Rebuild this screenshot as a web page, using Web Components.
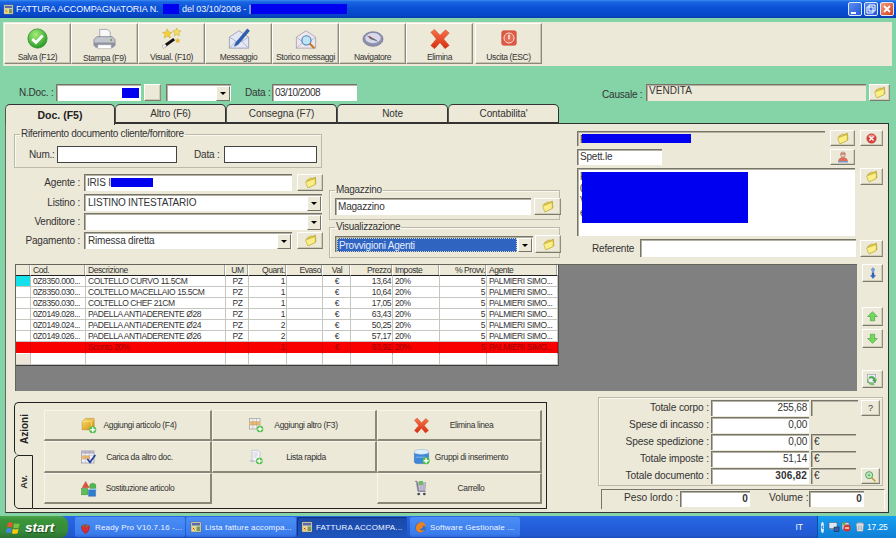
<!DOCTYPE html>
<html lang="it"><head><meta charset="utf-8"><title>Fattura</title>
<style>html,body{margin:0;padding:0;background:#84d4a8}</style></head>
<body>
<fattura-app></fattura-app>
<script>
const ICONS={
check:`<defs><radialGradient id="a" cx=".4" cy=".3" r=".8"><stop offset="0" stop-color="#a6ee78"/><stop offset="1" stop-color="#169018"/></radialGradient></defs><circle cx="12" cy="12" r="11" fill="url(#a)" stroke="#2a8a2e" stroke-width=".8"/><path d="M6 12.500l4.200 4.200L18 8.600" fill="none" stroke="#fff" stroke-width="3.200"/>`,
printer:`<path d="M7 10V1.500h8l3 2.500v6z" fill="#f8f8fa" stroke="#8a8f9c" stroke-width=".7"/><path d="M1 12l3-3h16l3 3v6l-2 2H3l-2-2z" fill="#c4c6ce" stroke="#6c7080" stroke-width=".7"/><path d="M1 15h22v3l-2 2H3l-2-2z" fill="#8f929e"/><path d="M5 17.500h14v4H5z" fill="#fff" stroke="#9a9ca8" stroke-width=".5"/><circle cx="19" cy="12.500" r="1" fill="#5a9a4a"/>`,
wand:`<path d="M1 20.500L14 11.500l2 2.500L3 23.500z" fill="#111"/><path d="M1 20.500l3.500-2.400 2 2.500L3 23.500z" fill="#eee"/><path d="M7 1l1.800 3.600 4 .4-3 2.500 1 3.900-3.700-2-3.400 2.100.8-4L1.600 5l3.900-.4z" fill="#f3d23c" stroke="#b08a10" stroke-width=".4"/><path d="M18 0l1.500 3 3.400.4-2.500 2.200.7 3.300-3.100-1.600-2.900 1.700.6-3.400-2.400-2.300 3.400-.4z" fill="#f5dd62" stroke="#b08a10" stroke-width=".4"/><path d="M19 11l1 2 2.300.3-1.600 1.600.4 2.300-2.100-1.100-2 1.100.4-2.300-1.600-1.600 2.200-.3z" fill="#e8b93a"/>`,
mailpen:`<path d="M1.500 10L12 3l10.500 7v12h-21z" fill="#e4e7f4" stroke="#7d83a8" stroke-width=".7"/><path d="M1.500 22l8-8 5 0 8 8M1.500 10l8 5M22.500 10l-8 5" fill="none" stroke="#9298b8" stroke-width=".7"/><path d="M21 1l2.500 2L11 18l-4 2 1.500-4z" fill="#2a5fb8" stroke="#173c80" stroke-width=".5"/>`,
mailmag:`<path d="M1.500 10L12 3l10.500 7v12h-21z" fill="#eee6ea" stroke="#8f8ea8" stroke-width=".7"/><path d="M1.500 10l8 6M22.500 10l-8 6M1.500 22l8-7M22.500 22l-8-7" fill="none" stroke="#a4a4c0" stroke-width=".7"/><circle cx="12.500" cy="13.500" r="5" fill="#bfe3f7" stroke="#3f7fbf" stroke-width="1.200"/><path d="M16 17l5 5" stroke="#c9791d" stroke-width="2.200"/>`,
compass:`<ellipse cx="12" cy="12" rx="11" ry="8" fill="#8f8fb0" stroke="#6d6d8e" stroke-width=".7"/><ellipse cx="12" cy="11" rx="8.500" ry="5.500" fill="#d9d8e8"/><path d="M5 8l9 4 4 3-9-3z" fill="#5a6e7a"/><path d="M8 9l4 3" stroke="#c33" stroke-width="1"/>`,
x:`<defs><linearGradient id="a" x2="0" y2="1"><stop offset="0" stop-color="#f4744a"/><stop offset="1" stop-color="#d92d10"/></linearGradient></defs><path d="M2 4.500L6 1.500l6 6.500 6-6 4 3.500-6 6.500 6 7-4.500 3.500-5.500-6.500-6 6.500-4-3.500 6-7z" fill="url(#a)" stroke="#c8401f" stroke-width=".5"/>`,
power:`<rect x="1" y="1" width="22" height="22" rx="3" fill="#df5a42" stroke="#c23a28" stroke-width=".7"/><circle cx="12" cy="12" r="7.500" fill="none" stroke="#fbe6e0" stroke-width="1.500"/><circle cx="12" cy="12" r="6" fill="#e46c55"/><rect x="11" y="7" width="2" height="7" fill="#fff"/>`,
folder:`<path d="M5 8l8-4.500 2 1.200 6-2.700 1 12.500L9 21z" fill="#e9cf50" stroke="#a8901f" stroke-width="1"/><path d="M3 11l15-5.500 3 .5-.5 10L7 22z" fill="#fbee86" stroke="#b09a24" stroke-width="1"/>`,
xcircle:`<circle cx="12" cy="12" r="10.500" fill="#d8413b" stroke="#a82a28" stroke-width=".7"/><ellipse cx="12" cy="7" rx="7" ry="4" fill="#ee8a80"/><path d="M7.500 7.500l9 9M16.500 7.500l-9 9" stroke="#fff" stroke-width="2.800"/>`,
person:`<circle cx="12" cy="7" r="5" fill="#f0d8c8" stroke="#a34a3a"/><path d="M3 21c0-6 4-8 9-8s9 2 9 8z" fill="#e46b55" stroke="#a34a3a" stroke-width=".7"/><path d="M2 20h20v3H2z" fill="#7f96c8"/><path d="M8 5h8v2H8z" fill="#a34a3a"/>`,
dblarrow:`<path d="M12 1l4 5h-2.500v5h-3V6H8z" fill="#79a9ea" stroke="#2458b8" stroke-width=".7"/><path d="M12 23l-5-6h3v-5h4v5h3z" fill="#2f67d0" stroke="#1a3f90" stroke-width=".7"/>`,
up:`<path d="M12 3l9 9h-5v8H8v-8H3z" fill="#74d65c" stroke="#2f9a32"/>`,
down:`<path d="M12 21l9-9h-5V4H8v8H3z" fill="#74d65c" stroke="#2f9a32"/>`,
swap:`<rect x="3" y="3" width="15" height="15" fill="#eef2f8" stroke="#8893a8"/><path d="M6 7c6-3 11 0 11 6l3-1-4 6-4-5 2 .5c0-3-4-6-8-3z" fill="#46b04a" stroke="#257a2a" stroke-width=".5"/><path d="M4 10c-1 6 4 10 10 9l1 3-8-1-4-6z" fill="#79cf68" stroke="#257a2a" stroke-width=".5"/>`,
boxplus:`<defs><linearGradient id="a" x2="1" y2="1"><stop offset="0" stop-color="#fbe36a"/><stop offset="1" stop-color="#d18a10"/></linearGradient></defs><path d="M3 6l5-4h12v12l-4 4H3z" fill="url(#a)" stroke="#a87410" stroke-width=".6"/><path d="M3 6h13v12M16 6l4-4" fill="none" stroke="#fff3a8" stroke-width=".8"/><circle cx="18" cy="18" r="5" fill="#4fbf4a"/><path d="M18 14.500v7M14.500 18h7" stroke="#fff" stroke-width="2"/>`,
gridplus:`<rect x="2" y="2" width="16" height="16" fill="#f4f2ee" stroke="#999"/><path d="M2 7h16v5H2z" fill="#f2b866"/><path d="M7.300 2v16M12.600 2v16M2 7h16M2 12h16" stroke="#a49a8c" stroke-width=".7"/><circle cx="18" cy="18" r="5" fill="#4fbf4a"/><path d="M18 14.500v7M14.500 18h7" stroke="#fff" stroke-width="2"/>`,
gridcheck:`<rect x="2" y="3" width="19" height="18" fill="#f4f2f4" stroke="#8a86a0"/><path d="M2 3h19v4H2z" fill="#b7b3c8"/><path d="M2 10h13v5H2z" fill="#f2b866"/><path d="M8 3v18M14 3v18M2 10h19M2 15h19" stroke="#a8a4b8" stroke-width=".7"/><path d="M11 15l4 5 8-11" fill="none" stroke="#1f3f9f" stroke-width="2.400"/>`,
docplus:`<path d="M6 2h9l3 3v13H6z" fill="#f4f4fa" stroke="#a8a8c0" stroke-width=".8"/><path d="M8 6h7M8 9h7M8 12h5" stroke="#b8b8cc" stroke-width=".8"/><path d="M1 18l6-2 3 4z" fill="#b8bccb"/><circle cx="17" cy="18" r="5" fill="#4fbf4a"/><path d="M17 14.500v7M13.500 18h7" stroke="#fff" stroke-width="2"/>`,
shapes:`<path d="M8 2l5 9H3z" fill="#e2503a" stroke="#a33" stroke-width=".5"/><circle cx="18" cy="9" r="4.500" fill="#4fb84f" stroke="#2a7a2a" stroke-width=".5"/><rect x="2" y="12" width="9" height="9" fill="#5cbf5c" stroke="#2a7a2a" stroke-width=".5"/><path d="M12 14h10v9H12z" fill="#2f7fd0" stroke="#1a4f90" stroke-width=".5"/><path d="M12 14l3-2h9l-2 2z" fill="#8fc0ee"/>`,
basket:`<path d="M2 7c0-3 20-3 20 0v12c0 2-2 3-3 3H5c-1 0-3-1-3-3z" fill="#3f87d8" stroke="#1c5aa8" stroke-width=".6"/><path d="M3 3.500c5-2 13-2 18 0l1 4c-6 2-14 2-20 0z" fill="#dff0fb" stroke="#7cabd8" stroke-width=".6"/><path d="M4 13h14" stroke="#9fcbf0"/><circle cx="18.500" cy="18" r="5" fill="#4fbf4a"/><path d="M18.500 14.500v7M15 18h7" stroke="#fff" stroke-width="2"/>`,
cart:`<path d="M5 4h14l-1 12H7z" fill="#c9c6d8" stroke="#7a7890" stroke-width=".7"/><path d="M8 4v12M12 4v12M16 4v12M5.500 8h13M6 12h12" stroke="#8f8da5" stroke-width=".5"/><rect x="9" y="1.500" width="6" height="6" fill="#6dbf5a"/><path d="M3 2h3l2 15h11" fill="none" stroke="#666680" stroke-width="1.200"/><circle cx="8.500" cy="21" r="2" fill="#444458"/><circle cx="17" cy="21" r="2" fill="#444458"/>`,
search:`<circle cx="9.500" cy="9.500" r="6.500" fill="#bfeac0" stroke="#3f9a4f" stroke-width="1.600"/><path d="M7 9.500h5M9.500 7v5" stroke="#3f9a4f" stroke-width="1.200"/><path d="M14 14l7 7" stroke="#c8a040" stroke-width="3"/>`,
flag:`<path d="M3 5c3-2 6-2 8 0l-1.500 7c-2-1.500-5-1.500-8 0z" fill="#e8562a"/><path d="M13 5c3 1.500 6 1.500 9 0l-1.500 7c-3 1.500-6 1.500-9 0z" fill="#7cc242"/><path d="M1 14c3-1.500 6-1.500 8 0l-1.500 7c-2-1.500-5-1.500-8 0z" fill="#3c8ae6"/><path d="M11 14c3 1.500 6 1.500 9 0l-1.500 7c-3 1.500-6 1.500-9 0z" fill="#fbc80c"/>`,
berry:`<path d="M5 9c3-3 11-3 14 0 2 4-3 13-7 14C8 22 3 13 5 9z" fill="#d9252c" stroke="#8e1a1f" stroke-width=".5"/><path d="M6 6l6 3 6-3-2 4H8z" fill="#4c9a3a"/><path d="M8 13h1M13 12h1M10 17h1M15 15h1" stroke="#f6b0a8"/>`,
app:`<rect x="2" y="2" width="20" height="20" fill="#dcdcb8" stroke="#6a5a3a" stroke-width=".8"/><rect x="4" y="4" width="16" height="5" fill="#5a6aa8"/><path d="M4 11h7v9H4z" fill="#f0d470"/><path d="M13 11h7v9h-7z" fill="#7a9a5a"/><path d="M6 14l3 3" stroke="#c22" stroke-width="2"/>`,
fox:`<circle cx="12" cy="12" r="10" fill="#2f6fd0"/><path d="M4 16C2 8 8 2 15 2c5 2 7 6 7 10-2-3-4-4-6-3 1 2 0 5-3 5-2 0-2 2 0 3 3 1 5 0 7-1-3 5-8 6-11 5-2-1-4-3-5-5z" fill="#ec8320"/>`,
nav1:`<rect x="2" y="3" width="16" height="12" fill="#dfe8f4" stroke="#556"/><rect x="5" y="15" width="10" height="2" fill="#99a"/><rect x="12" y="12" width="10" height="9" fill="#3a5fa8" stroke="#123"/>`,
shield:`<rect x="2" y="3" width="14" height="14" fill="#cfd6e4" stroke="#556"/><circle cx="12" cy="14" r="7" fill="#d5372e"/><path d="M8 14h8" stroke="#fff" stroke-width="2.500"/><circle cx="6" cy="6" r="3" fill="#57b84d"/>`,
speaker:`<path d="M4 5h16l-2 16H6z" fill="#d9dfe6" stroke="#6a7484"/><path d="M4 5c3-3 13-3 16 0" fill="#f4f6f8" stroke="#6a7484"/><path d="M9 9v9M15 9v9M12 9v9" stroke="#8a94a4"/>`
};
function comp(tag,css,html,extra){
  const t=document.createElement('template');
  t.innerHTML=`<style>${css}</style>${html}`;
  customElements.define(tag,class extends HTMLElement{
    constructor(){super();this.attachShadow({mode:'open'}).appendChild(t.content.cloneNode(true));}
    connectedCallback(){extra&&extra.call(this);}
  });
}
customElements.define('x-ico',class extends HTMLElement{
  constructor(){super();this.attachShadow({mode:'open'});}
  connectedCallback(){
    const s=this.getAttribute('size')||16;
    this.shadowRoot.innerHTML=`<style>:host{display:inline-block;width:${s}px;height:${s}px;line-height:0;flex:none}svg{width:100%;height:100%;display:block}</style><svg viewBox="0 0 24 24">${ICONS[this.getAttribute('name')]||''}</svg>`;
  }
});
const FONT='"Liberation Sans",Arial,sans-serif';
comp('x-title',`:host{display:flex;align-items:center;height:18px;box-sizing:border-box;padding:0 2px 0 3px;background:linear-gradient(#3a8cf0 0,#1a66e4 10%,#0a50d6 45%,#0648cc 80%,#0a3eb0 100%);color:#f4f7ff;font:9px ${FONT};letter-spacing:-.05px;white-space:nowrap}
 .t{margin-left:2px;display:flex;align-items:center}
 .w{margin-left:auto;display:flex;gap:2px}
 .w i{display:block;width:14px;height:14px;box-sizing:border-box;border:1px solid #dfe8fb;border-radius:2px;background:linear-gradient(135deg,#5b8ef0,#2358d8)}
 .w i.c{background:linear-gradient(135deg,#f0a080,#d43a1a)}
 svg{display:block;width:100%;height:100%}`,
 `<x-ico name="app" size="11"></x-ico><span class="t"><slot></slot></span>
 <span class="w"><i><svg viewBox="0 0 12 12"><path d="M2 9h5v2H2z" fill="#fff"/></svg></i><i><svg viewBox="0 0 12 12"><path d="M4 2h6v6H4zM2 4h6v6H2z" fill="none" stroke="#fff"/></svg></i><i class="c"><svg viewBox="0 0 12 12"><path d="M3 3l6 6M9 3l-6 6" stroke="#fff" stroke-width="1.800"/></svg></i></span>`);
comp('x-tool',`:host{display:flex;flex-direction:column;align-items:center;width:67px;height:41px;box-sizing:border-box;background:#ece9d8;border:1px solid;border-color:#fff #8a8878 #8a8878 #fff;box-shadow:inset -1px -1px 0 #c8c5b2;font:8.5px ${FONT};letter-spacing:-.4px;color:#333;padding-top:4px;white-space:nowrap}
 ::slotted(x-ico){margin-bottom:3px}`,`<slot name="i"></slot><slot></slot>`);
comp('x-btn',`:host{display:flex;align-items:center;justify-content:center;box-sizing:border-box;background:#ece9d8;border:1px solid;border-color:#fff #8f8d7c #7c7a6a #fff;box-shadow:inset -1px -1px 0 #cfccb8;font:9px ${FONT};color:#333;flex:none}`,`<slot></slot>`);
comp('x-field',`:host{display:flex;align-items:center;box-sizing:border-box;background:#fff;border-top:1px solid #77756a;border-left:1px solid #77756a;box-shadow:inset 1px 1px 0 #b4b1a2;padding:0 2px 2px;font:10px ${FONT};letter-spacing:-.2px;color:#333;white-space:nowrap;overflow:hidden;flex:none;position:relative}
 :host([flat]){border:1px solid #444;box-shadow:none}
 :host([beige]){background:#ece9d8}
 :host([right]){justify-content:flex-end}
 :host([bold]){font-weight:700;letter-spacing:.2px}`,`<slot></slot>`);
comp('x-combo',`:host{display:flex;align-items:stretch;box-sizing:border-box;background:#fff;border-top:1px solid #77756a;border-left:1px solid #77756a;box-shadow:inset 1px 1px 0 #b4b1a2;font:10px ${FONT};letter-spacing:-.2px;color:#333;white-space:nowrap;flex:none;padding:1px 1px 0 1px}
 .v{flex:1;min-width:0;display:flex;align-items:center;padding:0 2px 2px;overflow:hidden}
 :host([sel]) .v{background:#2f65c0;color:#e6eeff;outline:1px dotted #d8d4b0;outline-offset:-1px;padding-bottom:0}
 .a{width:12px;flex:none;background:#ece9d8;border:1px solid;border-color:#fff #77756a #77756a #fff;display:flex;align-items:center;justify-content:center;margin-left:1px}
 .a::after{content:"";border:3px solid transparent;border-top:3px solid #000;border-bottom:0}`,`<span class="v"><slot></slot></span><span class="a"></span>`);
comp('x-group',`:host{display:block;box-sizing:border-box}
 fieldset{margin:0;padding:0;border:1px solid #bcb9a8;box-shadow:inset 1px 1px 0 #fbfaf2;height:100%;box-sizing:border-box;min-width:0}
 legend{padding:0 1px;margin-left:5px;font:10px/10px ${FONT};letter-spacing:-.3px;color:#333}`,`<fieldset><legend><slot name="legend"></slot></legend><slot></slot></fieldset>`);
comp('x-tab',`:host{display:flex;align-items:center;justify-content:center;width:111px;height:19px;box-sizing:border-box;border:1px solid #333;border-left-color:#555;border-radius:5px 5px 0 0;background:#ece9d8;font:10px ${FONT};letter-spacing:-.1px;color:#333;flex:none}
 :host([active]){font-weight:700;height:21px;border-bottom:0;margin-bottom:-2px;position:relative;z-index:2;font-size:10.5px;letter-spacing:0;color:#222;align-items:flex-start;padding-top:4px;width:110px}`,`<slot></slot>`);
comp('x-action',`:host{display:flex;align-items:center;box-sizing:border-box;padding:0 30px 0 35px;background:#ece9d8;border-top:1px solid #f8f6ea;border-left:1px solid #f8f6ea;border-right:2px solid #8a8878;border-bottom:2px solid #8a8878;font:8.5px ${FONT};letter-spacing:-.35px;color:#333;white-space:nowrap;min-width:0}
 .l{flex:1;text-align:center;margin-left:3px}`,`<slot name="i"></slot><span class="l"><slot></slot></span>`);
comp('x-task',`:host{display:flex;align-items:center;gap:3px;width:110px;height:20px;box-sizing:border-box;padding:0 4px;border-radius:2px;background:linear-gradient(#4b8ef4,#3a7ced 85%,#2f68d8);color:#f0f5ff;font:8px ${FONT};letter-spacing:.15px;white-space:nowrap;overflow:hidden;flex:none}
 :host([active]){background:linear-gradient(#1a48a8,#1e55bd);box-shadow:inset 1px 1px 0 #12337e}`,`<slot></slot>`);
comp('x-taskbar',`:host{display:flex;align-items:center;height:22px;background:linear-gradient(#2a6ae8 0,#2866e2 12%,#245edb 50%,#2258d0 90%,#1c4cb4);color:#fff;font:9px ${FONT};flex:none}
 .s{display:flex;align-items:center;gap:4px;width:68px;height:22px;box-sizing:border-box;padding-left:6px;background:linear-gradient(#4ea24c,#3a9438 20%,#37893a 70%,#2c7230);border-radius:0 8px 8px 0;font:italic 700 13.500px ${FONT};text-shadow:1px 1px 1px #1a4a1a;margin-right:7px}
 .tasks{display:flex;gap:1px;align-items:center}
 .lang{margin-left:auto;margin-right:14px;font-size:8.500px}
 .tray{display:flex;align-items:center;gap:1px;width:79px;height:22px;box-sizing:border-box;padding-left:3px;background:linear-gradient(#17a0ee,#1290e4 50%,#0f7fd4);border-left:1px solid #0a4ea8;font-size:8.500px;letter-spacing:-.1px}
 .tray .tm{margin-left:auto;margin-right:9px}
 .ch{width:11px;height:11px;border-radius:50%;background:#e8f0ff;color:#2058c0;display:flex;align-items:center;justify-content:center;font:700 9px/9px ${FONT};margin-right:3px}`,
 `<span class="s"><x-ico name="flag" size="15"></x-ico>start</span><span class="tasks"><slot></slot></span><span class="lang">IT</span>
 <span class="tray"><span class="ch">‹</span><x-ico name="nav1" size="12"></x-ico><x-ico name="shield" size="12"></x-ico><x-ico name="speaker" size="12"></x-ico><span class="tm">17.25</span></span>`);
const COLS=[['',15,'l'],['Cod.',55,'l'],['Descrizione',140,'l'],['UM',23,'m'],['Quant.',38,'r'],['Evaso',36,'r'],['Val',28,'m'],['Prezzo',42,'r'],['Imposte',47,'l'],['% Provv.',47,'r'],['Agente',71,'l']];
const ROWS=[
['cy','0Z8350.000...','COLTELLO CURVO 11.5CM','PZ','1','','€','13,64','20%','5','PALMIERI SIMO...'],
['','0Z8350.030...','COLTELLO MACELLAIO 15.5CM','PZ','1','','€','10,64','20%','5','PALMIERI SIMO...'],
['','0Z8350.030...','COLTELLO CHEF 21CM','PZ','1','','€','17,05','20%','5','PALMIERI SIMO...'],
['','0Z0149.028...','PADELLA ANTIADERENTE Ø28','PZ','1','','€','63,43','20%','5','PALMIERI SIMO...'],
['','0Z0149.024...','PADELLA ANTIADERENTE Ø24','PZ','2','','€','50,25','20%','5','PALMIERI SIMO...'],
['','0Z0149.026...','PADELLA ANTIADERENTE Ø26','PZ','2','','€','57,17','20%','5','PALMIERI SIMO...'],
['red','','Sconto 20%','','1','','€','63,92','20%','5','PALMIERI SIMO...'],
['e','','','','','','','','','','']];
customElements.define('x-datagrid',class extends HTMLElement{
  constructor(){super();this.attachShadow({mode:'open'});}
  connectedCallback(){
    const tracks=COLS.map(c=>c[1]+'px').join(' ');
    const cell=(txt,i,cls)=>`<div class="c ${COLS[i][2]} ${i==0?'rh':''} ${cls}">${txt}</div>`;
    const h=COLS.map((c,i)=>cell(c[0],i,'h')).join('');
    let b='';
    ROWS.forEach(r=>{
      const rc=r[0]==='red'?'red':'';
      r.forEach((v,i)=>{b+=cell(i==0?'':v,i,rc+(i==0?' f-'+(r[0]||'n'):''));});
    });
    this.shadowRoot.innerHTML=`<style>
    :host{display:block;box-sizing:border-box;background:#808080;border-top:1px solid #66645a;border-left:1px solid #66645a;font:8.5px ${FONT};letter-spacing:-.42px;color:#333;flex:none}
    .g{display:grid;width:max-content;grid-template-columns:${tracks};grid-template-rows:11px repeat(6,11px) 12px 11px;border-bottom:1px solid #3c3c3c;border-right:1px solid #555}
    .c{box-sizing:border-box;background:#fff;border-right:1px solid #c6c6c0;border-bottom:1px solid #c6c6c0;padding:0 1px 0 2px;line-height:10px;white-space:nowrap;overflow:hidden}
    .l{text-align:left}.r{text-align:right}.m{text-align:center}
    .h{background:#ece9d8;border-right:1px solid #fff;box-shadow:inset -1px 0 0 #aca899;border-bottom:1px solid #222;color:#333}
    .rh.f-n{background:#fff}
    .rh.f-cy{background:#13e0ea}
    .rh.f-e{background:#ece5d8}
    .red{background:#f80000;color:#a00000;border-right-color:#d80000;border-bottom-color:#fff}
    </style><div class="g">${h}${b}</div>`;
  }
});
comp('x-actions',`:host{display:grid;grid-template-columns:19px 1fr;grid-template-rows:53px 54px;box-sizing:border-box;width:532px;height:107px;font:700 10px ${FONT};color:#222;flex:none;background:#ece9d8}
 .tab{display:flex;align-items:center;justify-content:center;box-sizing:border-box}
 .tab span{writing-mode:vertical-rl;transform:rotate(180deg)}
 .a{grid-row:1;grid-column:1;border:1px solid #222;border-right:0;border-bottom:0;border-radius:5px 0 0 5px}
 .b{grid-row:2;grid-column:1;border:1px solid #222;border-radius:5px 0 0 5px;font-size:9.500px;color:#333}
 .body{grid-row:1/3;grid-column:2;border:1px solid #222;border-left:0;box-sizing:border-box;padding:7px 4px 5px 11px}`,
 `<div class="tab a"><span>Azioni</span></div><div class="tab b"><span>Av.</span></div><div class="body"><slot></slot></div>`);
comp('fattura-app',`
 :host{display:flex;flex-direction:column;width:896px;height:538px;background:#84d4a8;font:10px ${FONT};color:#333;overflow:hidden}
 .bl{background:#0000f0}
 .toolbar{display:flex;margin:4px 4px 0 3px;height:44px;box-sizing:border-box;padding:1px 0 0 1px;background:#ece9d8;flex:none}
 .docrow{display:flex;align-items:center;height:17px;margin-top:18px;padding-left:19px;flex:none}
 .lbl{white-space:nowrap;letter-spacing:-.2px;color:#333;flex:none}
 .tabs{display:flex;margin-top:3px;padding-left:5px;height:19px;flex:none}
 .panel{flex:1;min-height:0;margin:0 7px 0 5px;background:#ece9d8;border:1px solid #333;border-left-color:#666;box-sizing:border-box;padding:5px 0 0 8px}
 .upper{display:grid;grid-template-columns:309px 237px 306px;height:129px}
 .colL{display:flex;flex-direction:column}
 .colM{display:flex;flex-direction:column;margin-left:6px;padding-top:56px}
 .colR{display:flex;flex-direction:column;margin-left:17px;padding-top:1px}
 .row{display:flex;align-items:center;height:17px;flex:none}
 .row .l{width:66px;text-align:right;padding-right:4px;flex:none;letter-spacing:-.2px;color:#333;white-space:nowrap}
 .inner{display:flex;align-items:center;padding:7px 5px 4px 14px}
 .mg{padding:3px 5px 4px 5px;display:flex;align-items:center}
 .gridrow{display:flex;margin:6px 0 0 1px}
 .side{display:flex;flex-direction:column;margin-left:5px;width:21px}
 .lower{display:flex;margin-top:6px;flex:none}
 .actgrid{display:grid;height:100%;grid-template-columns:168px 165px 165px;grid-template-rows:31px 32px 31px}
 .tot{display:grid;grid-template-columns:112px 98px 47px 5px 19px;grid-auto-rows:16px;row-gap:1px;padding:2px 0;height:100%;box-sizing:border-box;align-items:stretch}
 .tot .l{padding-right:2px;font-size:10.2px;letter-spacing:-.15px;color:#333;display:flex;align-items:center;justify-content:flex-end;white-space:nowrap;padding-bottom:1px}
 .totwrap{display:flex;flex-direction:column;margin-left:52px;width:287px}
 .box1{height:89px;border:1px solid #bcb9a8;box-shadow:inset 1px 1px 0 #fbfaf2;width:285px;box-sizing:border-box}
 .box2{height:20px;margin-top:3px;margin-left:3px;border-top:1px solid #77756a;border-left:1px solid #77756a;border-right:1px solid #fff;box-sizing:border-box;display:flex;align-items:flex-start;padding-top:1px;font-size:10.2px;color:#333;width:284px;white-space:nowrap}
 .box2 span{flex:none;line-height:14px}
 `,`
 <x-title>FATTURA ACCOMPAGNATORIA N.&nbsp;<span class="bl" style="display:inline-block;width:16px;height:10px;margin:0 3px 0 2px"></span>del 03/10/2008 - |<span class="bl" style="display:inline-block;width:96px;height:10px"></span></x-title>
 <div class="toolbar">
  <x-tool><x-ico slot="i" name="check" size="21"></x-ico>Salva (F12)</x-tool>
  <x-tool><x-ico slot="i" name="printer" size="23" style="margin-bottom:2px"></x-ico>Stampa (F9)</x-tool>
  <x-tool><x-ico slot="i" name="wand" size="21"></x-ico>Visual. (F10)</x-tool>
  <x-tool><x-ico slot="i" name="mailpen" size="22" style="margin-bottom:2px"></x-ico>Messaggio</x-tool>
  <x-tool><x-ico slot="i" name="mailmag" size="22" style="margin-bottom:2px"></x-ico>Storico messaggi</x-tool>
  <x-tool><x-ico slot="i" name="compass" size="22" style="margin-bottom:2px"></x-ico>Navigatore</x-tool>
  <x-tool><x-ico slot="i" name="x" size="22" style="margin-bottom:2px"></x-ico>Elimina</x-tool>
  <x-tool style="margin-left:2px"><x-ico slot="i" name="power" size="16" style="margin:2px 0 6px"></x-ico>Uscita (ESC)</x-tool>
 </div>
 <div class="docrow">
  <span class="lbl" style="width:37px">N.Doc. :</span>
  <x-field style="width:85px;height:17px;justify-content:flex-end;padding:0 2px 0 0"><span class="bl" style="width:17px;height:10px"></span></x-field>
  <x-btn style="width:17px;height:17px;margin-left:3px"></x-btn>
  <x-combo style="width:65px;height:17px;margin-left:5px"></x-combo>
  <span class="lbl" style="margin-left:14px;width:27px">Data :</span>
  <x-field style="width:85px;height:17px;letter-spacing:-.5px">03/10/2008</x-field>
  <span class="lbl" style="margin:3px 0 0 245px;width:44px">Causale :</span>
  <x-field beige style="width:220px;height:17px;align-items:flex-start;padding-top:0;letter-spacing:.05px">VENDITA</x-field>
  <x-btn style="width:21px;height:17px;margin-left:3px"><x-ico name="folder" size="13"></x-ico></x-btn>
 </div>
 <div class="tabs"><x-tab active>Doc. (F5)</x-tab><x-tab>Altro (F6)</x-tab><x-tab>Consegna (F7)</x-tab><x-tab>Note</x-tab><x-tab>Contabilita'</x-tab></div>
 <div class="panel">
  <div class="upper">
   <div class="colL">
    <x-group style="height:39px;width:308px"><span slot="legend">Riferimento documento cliente/fornitore</span>
     <div class="inner"><span class="lbl" style="width:28px">Num.:</span><x-field flat style="width:120px;height:17px"></x-field><span class="lbl" style="margin-left:17px;width:30px">Data :</span><x-field flat style="width:93px;height:17px"></x-field></div>
    </x-group>
    <div class="row" style="margin-top:6px"><span class="l">Agente :</span><x-field style="width:208px;height:17px">IRIS I<span class="bl" style="width:42px;height:9px"></span></x-field><x-btn style="width:26px;height:17px;margin-left:5px"><x-ico name="folder" size="13"></x-ico></x-btn></div>
    <div class="row" style="margin-top:3px"><span class="l">Listino :</span><x-combo style="width:238px;height:17px">LISTINO INTESTATARIO</x-combo></div>
    <div class="row" style="margin-top:2px"><span class="l">Venditore :</span><x-combo style="width:238px;height:17px"></x-combo></div>
    <div class="row" style="margin-top:2px"><span class="l">Pagamento :</span><x-combo style="width:208px;height:17px">Rimessa diretta</x-combo><x-btn style="width:26px;height:17px;margin-left:5px"><x-ico name="folder" size="13"></x-ico></x-btn></div>
   </div>
   <div class="colM">
    <x-group style="height:35px"><span slot="legend">Magazzino</span><div class="mg"><x-field style="width:196px;height:17px">Magazzino</x-field><x-btn style="width:27px;height:17px;margin-left:3px"><x-ico name="folder" size="13"></x-ico></x-btn></div></x-group>
    <x-group style="height:36px;margin-top:2px"><span slot="legend">Visualizzazione</span><div class="mg" style="padding-bottom:5px"><x-combo sel style="width:198px;height:16px">Provvigioni Agenti</x-combo><x-btn style="width:26px;height:18px;margin-left:2px"><x-ico name="folder" size="13"></x-ico></x-btn></div></x-group>
   </div>
   <div class="colR">
    <div class="row" style="height:16px"><x-field beige style="width:248px;height:15px;margin-top:1px;padding-bottom:0">F<span class="bl" style="position:absolute;left:4px;top:2px;width:109px;height:9px"></span></x-field><x-btn style="width:25px;height:16px;margin-left:5px"><x-ico name="folder" size="13"></x-ico></x-btn><x-btn style="width:23px;height:16px;margin-left:5px"><x-ico name="xcircle" size="11"></x-ico></x-btn></div>
    <div class="row" style="height:16px;margin-top:3px"><x-field style="width:85px;height:16px">Spett.le</x-field><x-btn style="width:25px;height:16px;margin-left:168px"><x-ico name="person" size="12"></x-ico></x-btn></div>
    <div class="row" style="height:68px;margin-top:3px;align-items:flex-start"><x-field style="width:278px;height:68px;align-items:flex-start;padding-top:2px"><span style="line-height:12px;white-space:pre">R
0
V
e</span><span class="bl" style="position:absolute;left:4px;top:3px;width:166px;height:51px"></span></x-field><x-btn style="width:23px;height:17px;margin-left:5px"><x-ico name="folder" size="13"></x-ico></x-btn></div>
    <div class="row" style="height:18px;margin-top:3px"><span class="lbl" style="width:48px;margin-left:15px">Referente</span><x-field style="width:216px;height:18px;margin-left:0"></x-field><x-btn style="width:23px;height:17px;margin-left:4px"><x-ico name="folder" size="13"></x-ico></x-btn></div>
   </div>
  </div>
  <div class="gridrow">
   <x-datagrid style="width:842px;height:127px"></x-datagrid>
   <div class="side">
    <x-btn style="height:18px"><x-ico name="dblarrow" size="12"></x-ico></x-btn>
    <x-btn style="height:19px;margin-top:25px"><x-ico name="up" size="13"></x-ico></x-btn>
    <x-btn style="height:19px;margin-top:3px"><x-ico name="down" size="13"></x-ico></x-btn>
    <x-btn style="height:18px;margin-top:22px"><x-ico name="swap" size="13"></x-ico></x-btn>
   </div>
  </div>
  <div class="lower">
   <x-actions style="margin-top:5px">
    <div class="actgrid">
     <x-action><x-ico slot="i" name="boxplus" size="17"></x-ico>Aggiungi articolo (F4)</x-action>
     <x-action><x-ico slot="i" name="gridplus" size="16"></x-ico>Aggiungi altro (F3)</x-action>
     <x-action><x-ico slot="i" name="x" size="17"></x-ico>Elimina linea</x-action>
     <x-action><x-ico slot="i" name="gridcheck" size="16"></x-ico>Carica da altro doc.</x-action>
     <x-action><x-ico slot="i" name="docplus" size="16"></x-ico>Lista rapida</x-action>
     <x-action><x-ico slot="i" name="basket" size="17"></x-ico>Gruppi di inserimento</x-action>
     <x-action><x-ico slot="i" name="shapes" size="17"></x-ico>Sostituzione articolo</x-action>
     <span></span>
     <x-action><x-ico slot="i" name="cart" size="16"></x-ico>Carrello</x-action>
    </div>
   </x-actions>
   <div class="totwrap">
    <div class="box1"><div class="tot">
     <span class="l">Totale corpo :</span><x-field right>255,68</x-field><x-field beige style="margin-left:2px;margin-right:-2px"></x-field><span></span><x-btn>?</x-btn>
     <span class="l">Spese di incasso :</span><x-field right>0,00</x-field><span></span><span></span><span></span>
     <span class="l">Spese spedizione :</span><x-field right>0,00</x-field><x-field beige style="margin-left:2px">€</x-field><span></span><span></span>
     <span class="l">Totale imposte :</span><x-field right>51,14</x-field><x-field beige style="margin-left:2px">€</x-field><span></span><span></span>
     <span class="l">Totale documento :</span><x-field right bold>306,82</x-field><x-field beige style="margin-left:2px">€</x-field><span></span><x-btn><x-ico name="search" size="13"></x-ico></x-btn>
    </div></div>
    <div class="box2"><span style="margin-left:22px;width:56px">Peso lordo :</span><x-field right bold style="width:70px;height:16px">0</x-field><span style="margin-left:19px;width:40px">Volume :</span><x-field right bold style="width:55px;height:16px">0</x-field></div>
   </div>
  </div>
 </div>
 <x-taskbar style="margin-top:3px">
  <x-task><x-ico name="berry" size="13"></x-ico>Ready Pro V10.7.16 -...</x-task>
  <x-task><x-ico name="app" size="12"></x-ico>Lista fatture accompa...</x-task>
  <x-task active><x-ico name="app" size="12"></x-ico>FATTURA ACCOMPA...</x-task>
  <x-task style="margin-left:2px"><x-ico name="fox" size="13"></x-ico>Software Gestionale ...</x-task>
 </x-taskbar>
`);
</script>
</body></html>
